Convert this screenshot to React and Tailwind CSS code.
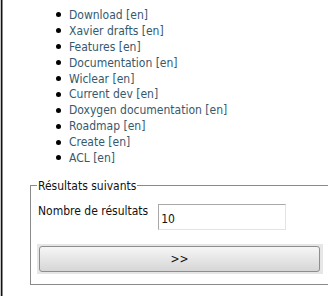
import React from "react";

const items = [
  "Download [en]",
  "Xavier drafts [en]",
  "Features [en]",
  "Documentation [en]",
  "Wiclear [en]",
  "Current dev [en]",
  "Doxygen documentation [en]",
  "Roadmap [en]",
  "Create [en]",
  "ACL [en]",
];

export default function App() {
  return (
    <div
      className="flex w-[328px] h-[296px] overflow-hidden bg-white text-[12px] leading-[16px] text-[#111] [font-stretch:condensed]"
      style={{ fontFamily: "'DejaVu Sans Condensed', 'DejaVu Sans', sans-serif" }}
    >
      <div className="w-px bg-[#c4c4c4]" />
      <div className="w-px bg-[#111]" />
      <div className="w-px bg-[#8c8c8c]" />
      <div className="flex-1 flex flex-col">
        <ul className="mt-[7px] ml-[53px] flex flex-col">
          {items.map((t) => (
            <li key={t} className="flex items-center h-[15.9px]">
              <span className="w-[5px] h-[5px] rounded-full bg-black" />
              <a className="ml-[8px] text-[#35596d] whitespace-nowrap">{t}</a>
            </li>
          ))}
        </ul>
        <fieldset className="mt-[12px] ml-[27px] w-[298px] border border-r-0 border-[#8a8a8a] pl-[6px] pb-[10px]">
          <legend className="px-[1px]">Résultats suivants</legend>
          <div className="flex items-start mt-[10px] ml-[1px]">
            <span className="whitespace-nowrap -mt-[1px]">Nombre de résultats</span>
            <input
              className="ml-[10px] w-[128px] h-[26px] border border-t-[#a8a8a8] border-l-[#a8a8a8] border-b-[#e4e4e4] border-r-[#e4e4e4] px-[2px] pt-[4px] text-[12px] outline-none"
              style={{ fontFamily: "inherit" }}
              defaultValue="10"
            />
          </div>
          <div className="mt-[14px] w-[286px] bg-[#e6e6e6] pt-[2px] pb-[2px] pl-[2px] pr-[3px]">
            <button className="w-full h-[26px] rounded-[3px] border border-[#8e8e8e] bg-gradient-to-b from-[#f6f6f6] to-[#d6d6d6] text-[12px] text-[#111]">
              &gt;&gt;
            </button>
          </div>
        </fieldset>
      </div>
    </div>
  );
}
